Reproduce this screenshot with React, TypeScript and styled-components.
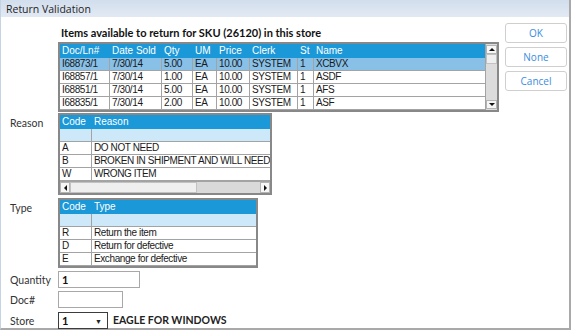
import styled, { createGlobalStyle } from "styled-components"

const GlobalStyle = createGlobalStyle`
  html, body {
    margin: 0;
    padding: 0;
    background: #fff;
  }
  body {
    width: 571px;
    height: 330px;
    overflow: hidden;
  }
`

const gridFont = `"Liberation Sans", Arial, sans-serif`
const uiFont = `Lato, "Open Sans", sans-serif`

interface Column {
    title: string
    width: number
}

const itemColumns: Column[] = [
    { title: "Doc/Ln#", width: 50 },
    { title: "Date Sold", width: 52 },
    { title: "Qty", width: 31 },
    { title: "UM", width: 24 },
    { title: "Price", width: 33 },
    { title: "Clerk", width: 48 },
    { title: "St", width: 16 },
    { title: "Name", width: 172 },
]

const itemRows = [
    ["I68873/1", "7/30/14", "5.00", "EA", "10.00", "SYSTEM", "1", "XCBVX"],
    ["I68857/1", "7/30/14", "1.00", "EA", "10.00", "SYSTEM", "1", "ASDF"],
    ["I68851/1", "7/30/14", "5.00", "EA", "10.00", "SYSTEM", "1", "AFS"],
    ["I68835/1", "7/30/14", "2.00", "EA", "10.00", "SYSTEM", "1", "ASF"],
]

const reasonRows = [
    ["A", "DO NOT NEED"],
    ["B", "BROKEN IN SHIPMENT AND WILL NEED"],
    ["W", "WRONG ITEM"],
]

const typeRows = [
    ["R", "Return the item"],
    ["D", "Return for defective"],
    ["E", "Exchange for defective"],
]

const Window = styled.div`
  width: 571px;
  height: 330px;
  box-sizing: border-box;
  border-left: 1px solid #c6d3e3;
  border-right: 2px solid #a9a9a9;
  border-bottom: 2px solid #a9a9a9;
  display: flex;
  flex-direction: column;
  background: #fff;
`

const TitleBar = styled.div`
  height: 17px;
  flex: none;
  display: flex;
  align-items: center;
  padding-left: 5px;
  background: linear-gradient(#d2deed, #e2e9f3);
  font: 10.5px "Open Sans", sans-serif;
  color: #1e1e1e;
`

const Content = styled.div`
  flex: 1;
  display: flex;
`

const Form = styled.div`
  flex: 1;
  display: flex;
  flex-direction: column;
  padding-top: 9px;
`

const Row = styled.div<{ $gap?: number }>`
  display: flex;
  align-items: flex-start;
  margin-top: ${(p) => p.$gap ?? 0}px;
`

const Label = styled.div<{ $center?: boolean }>`
  width: 57px;
  flex: none;
  box-sizing: border-box;
  padding-left: 9px;
  padding-top: ${(p) => (p.$center ? 0 : 3)}px;
  align-self: ${(p) => (p.$center ? "center" : "flex-start")};
  font: 10.5px/14px ${uiFont};
  color: #333;
`

const Heading = styled.div`
  padding-left: 3px;
  font: bold 11px/14px ${uiFont};
  color: #111;
  margin-bottom: 2px;
`

const Frame = styled.div<{ $width: number }>`
  width: ${(p) => p.$width}px;
  box-sizing: border-box;
  border: 2px solid #888;
  display: flex;
  flex-direction: column;
  overflow: hidden;
  background: #fff;
`

const FrameBody = styled.div`
  display: flex;
`

const Cells = styled.div`
  flex: 1;
  overflow: hidden;
`

const GridRow = styled.div<{ $cols: string; $tone?: "head" | "blank" | "selected" }>`
  display: grid;
  grid-template-columns: ${(p) => p.$cols};
  background: ${(p) =>
        p.$tone === "head" ? "#1b98d8" : p.$tone === "blank" ? "#cde9f9" : p.$tone === "selected" ? "#88c0e7" : "#fff"};
`

const HeadCell = styled.div`
  height: 14px;
  padding-left: 2px;
  font: 10px/14px ${gridFont};
  color: #fff;
  white-space: nowrap;
  overflow: hidden;
`

const Cell = styled.div`
  height: 13px;
  box-sizing: border-box;
  border-right: 1px solid #a3a3a3;
  border-bottom: 1px solid #a3a3a3;
  padding-left: 2px;
  font: 10px/12px ${gridFont};
  letter-spacing: -0.4px;
  color: #1a1a1a;
  white-space: nowrap;
  overflow: hidden;

  &:last-child {
    border-right: none;
  }
`

const VScroll = styled.div`
  width: 11px;
  flex: none;
  border-left: 1px solid #a3a3a3;
  background: #dcdcdc;
  display: flex;
  flex-direction: column;
  padding: 1px 0;
`

const HScroll = styled.div`
  height: 11px;
  border-top: 1px solid #a3a3a3;
  background: #d9d9d9;
  display: flex;
`

const ArrowBox = styled.div<{ $dir: "up" | "down" | "left" | "right" }>`
  width: ${(p) => (p.$dir === "left" || p.$dir === "right" ? "10px" : "auto")};
  height: ${(p) => (p.$dir === "up" || p.$dir === "down" ? "9px" : "auto")};
  flex: none;
  box-sizing: border-box;
  border: 1px solid #b4b4b4;
  background: #f6f6f6;
  display: flex;
  align-items: center;
  justify-content: center;

  &::after {
    content: "";
    width: 0;
    height: 0;
    ${(p) =>
        p.$dir === "up"
            ? "border-left: 3px solid transparent; border-right: 3px solid transparent; border-bottom: 3px solid #111;"
            : p.$dir === "down"
                ? "border-left: 3px solid transparent; border-right: 3px solid transparent; border-top: 3px solid #111;"
                : p.$dir === "left"
                    ? "border-top: 3px solid transparent; border-bottom: 3px solid transparent; border-right: 3px solid #111;"
                    : "border-top: 3px solid transparent; border-bottom: 3px solid transparent; border-left: 3px solid #111;"}
  }
`

const Thumb = styled.div<{ $size: number; $horizontal?: boolean }>`
  ${(p) => (p.$horizontal ? `width: ${p.$size}px;` : `height: ${p.$size}px;`)}
  flex: none;
  box-sizing: border-box;
  border: 1px solid #c2c2c2;
  background: #efefef;
`

const Track = styled.div`
  flex: 1;
`

const Side = styled.div`
  width: 62px;
  flex: none;
  margin-right: 2px;
  padding-top: 6px;
  display: flex;
  flex-direction: column;
  gap: 4px;
`

const Button = styled.button`
  height: 20px;
  box-sizing: border-box;
  border: 1px solid #cfcfcf;
  border-radius: 3px;
  background: #fff;
  color: #3a8de0;
  font: 10px "Open Sans", sans-serif;
  padding: 0;
  cursor: pointer;
`

const Input = styled.div<{ $width: number; $dark?: boolean }>`
  width: ${(p) => p.$width}px;
  height: 17px;
  box-sizing: border-box;
  border: 1px solid ${(p) => (p.$dark ? "#3c3c3c" : "#a8a8a8")};
  display: flex;
  align-items: center;
  padding: 0 3px;
  font: bold 11px ${uiFont};
  color: #111;
`

const Caret = styled.span`
  margin-left: auto;
  margin-right: 2px;
  font-size: 7px;
  color: #222;
`

const StoreName = styled.div`
  margin-left: 5px;
  font: bold 10.5px/17px ${uiFont};
  color: #222;
`

interface GridProps {
    width: number
    columns: Column[]
    rows: string[][]
    selected?: number
    blank?: boolean
    vscroll?: boolean
    hscroll?: boolean
}

function DataGrid({ width, columns, rows, selected, blank, vscroll, hscroll }: GridProps) {
    const cols = columns.map((c) => `${c.width}px`).join(" ")
    return (
        <Frame $width={width}>
            <FrameBody>
                <Cells>
                    <GridRow $cols={cols} $tone="head">
                        {columns.map((c) => <HeadCell key={c.title}>{c.title}</HeadCell>)}
                    </GridRow>
                    {blank && (
                        <GridRow $cols={cols} $tone="blank">
                            {columns.map((c) => <Cell key={c.title} />)}
                        </GridRow>
                    )}
                    {rows.map((row, i) => (
                        <GridRow $cols={cols} $tone={selected === i ? "selected" : undefined} key={`${row[0]}-${i}`}>
                            {row.map((value, j) => <Cell key={j}>{value}</Cell>)}
                        </GridRow>
                    ))}
                </Cells>
                {vscroll && (
                    <VScroll>
                        <ArrowBox $dir="up" />
                        <Thumb $size={10} />
                        <Track />
                        <ArrowBox $dir="down" />
                    </VScroll>
                )}
            </FrameBody>
            {hscroll && (
                <HScroll>
                    <ArrowBox $dir="left" />
                    <Thumb $size={127} $horizontal />
                    <Track />
                    <ArrowBox $dir="right" />
                </HScroll>
            )}
        </Frame>
    )
}

export default function App() {
    return (
        <>
            <GlobalStyle />
            <Window>
                <TitleBar>Return Validation</TitleBar>
                <Content>
                    <Form>
                        <Row>
                            <Label />
                            <Heading>Items available to return for SKU (26120) in this store</Heading>
                        </Row>
                        <Row>
                            <Label />
                            <DataGrid width={441} columns={itemColumns} rows={itemRows} selected={0} vscroll />
                        </Row>
                        <Row $gap={1}>
                            <Label>Reason</Label>
                            <DataGrid
                                width={214}
                                columns={[{ title: "Code", width: 32 }, { title: "Reason", width: 200 }]}
                                rows={reasonRows}
                                blank
                                hscroll
                            />
                        </Row>
                        <Row $gap={3}>
                            <Label>Type</Label>
                            <DataGrid
                                width={200}
                                columns={[{ title: "Code", width: 32 }, { title: "Type", width: 164 }]}
                                rows={typeRows}
                                blank
                            />
                        </Row>
                        <Row $gap={3}>
                            <Label $center>Quantity</Label>
                            <Input $width={82}>1</Input>
                        </Row>
                        <Row $gap={3}>
                            <Label $center>Doc#</Label>
                            <Input $width={65} />
                        </Row>
                        <Row $gap={4}>
                            <Label $center>Store</Label>
                            <Input $width={50} $dark>
                                1<Caret>▼</Caret>
                            </Input>
                            <StoreName>EAGLE FOR WINDOWS</StoreName>
                        </Row>
                    </Form>
                    <Side>
                        <Button>OK</Button>
                        <Button>None</Button>
                        <Button>Cancel</Button>
                    </Side>
                </Content>
            </Window>
        </>
    )
}
